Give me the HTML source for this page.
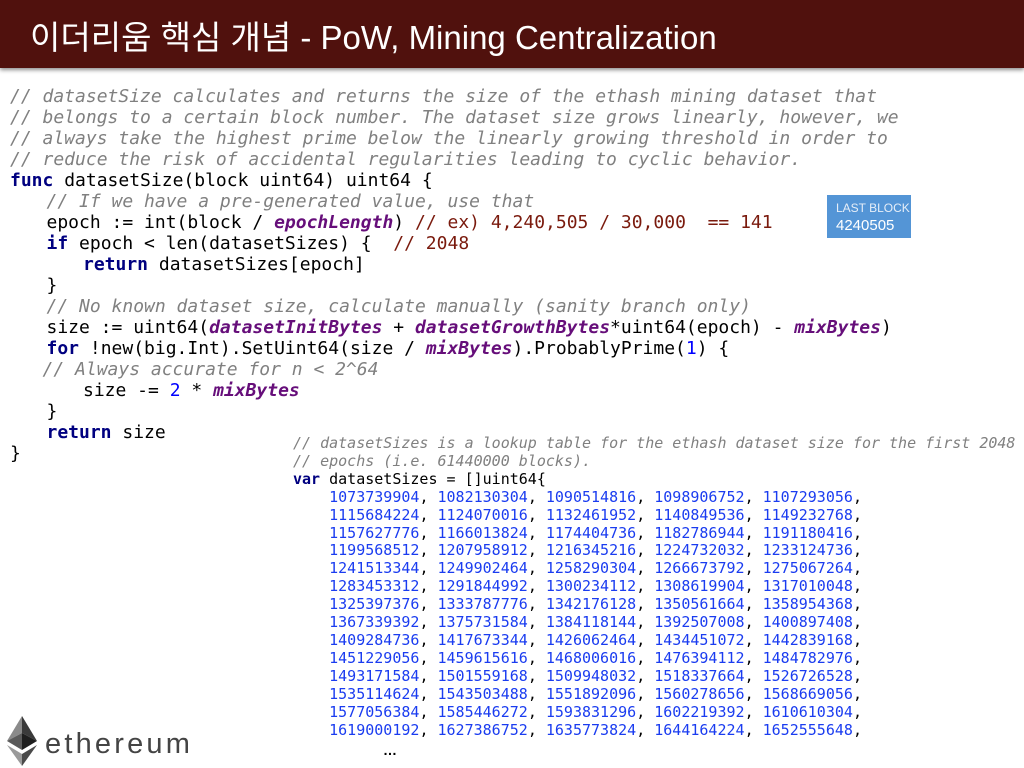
<!DOCTYPE html>
<html><head><meta charset="utf-8"><style>
body{margin:0;width:1024px;height:768px;background:#fff;position:relative;overflow:hidden}
.bar{position:absolute;left:0;top:0;width:1024px;height:68px;background:#50110d;box-shadow:0 2px 4px rgba(0,0,0,.45)}
.title{position:absolute;left:30px;top:11px;color:#fff;font:33px "Liberation Sans","Noto Sans CJK KR",sans-serif;white-space:nowrap}
pre{margin:0;position:absolute;font-family:"DejaVu Sans Mono","Liberation Mono",monospace;color:#000;tab-size:36.5px;-moz-tab-size:36.5px}
.m{left:10px;top:86px;font-size:18px;line-height:21px}
.s{left:293px;top:435px;font-size:15px;line-height:17.9px}
.c{color:#808080;font-style:italic}
.k{color:#000080;font-weight:bold}
.p{color:#660e7a;font-weight:bold;font-style:italic}
.r{color:#7a1a0d}
.n{color:#0000ff}
.s .n{color:#1a3cf0}
.box{position:absolute;left:827px;top:195px;width:84px;height:43px;background:#5495d6;color:#fff;font-family:"Liberation Sans",sans-serif}
.box .a{position:absolute;left:9px;top:6px;font-size:12px;color:#e6eef8}
.box .b{position:absolute;left:9px;top:22px;font-size:15px}
.eth{position:absolute;left:45px;top:728px;font:29px "Liberation Sans",sans-serif;font-weight:300;color:#444;letter-spacing:3.2px}
.dots{position:absolute;left:383px;top:742px;font:bold 14px "Liberation Sans",sans-serif}
</style></head><body>
<div class="bar"></div>
<div class="title">이더리움 핵심 개념 - PoW, Mining Centralization</div>
<pre class="m"><span class="c">// datasetSize calculates and returns the size of the ethash mining dataset that
// belongs to a certain block number. The dataset size grows linearly, however, we
// always take the highest prime below the linearly growing threshold in order to
// reduce the risk of accidental regularities leading to cyclic behavior.</span>
<span class="k">func</span> datasetSize(block uint64) uint64 {
	<span class="c">// If we have a pre-generated value, use that</span>
	epoch := int(block / <span class="p">epochLength</span>) <span class="r">// ex) 4,240,505 / 30,000  == 141</span>
	<span class="k">if</span> epoch &lt; len(datasetSizes) {  <span class="r">// 2048</span>
		<span class="k">return</span> datasetSizes[epoch]
	}
	<span class="c">// No known dataset size, calculate manually (sanity branch only)</span>
	size := uint64(<span class="p">datasetInitBytes</span> + <span class="p">datasetGrowthBytes</span>*uint64(epoch) - <span class="p">mixBytes</span>)
	<span class="k">for</span> !new(big.Int).SetUint64(size / <span class="p">mixBytes</span>).ProbablyPrime(<span class="n">1</span>) {
   <span class="c">// Always accurate for n &lt; 2^64</span>
		size -= <span class="n">2</span> * <span class="p">mixBytes</span>
	}
	<span class="k">return</span> size
}</pre>
<pre class="s"><span class="c">// datasetSizes is a lookup table for the ethash dataset size for the first 2048
// epochs (i.e. 61440000 blocks).</span>
<span class="k">var</span> datasetSizes = []uint64{
    <span class="n">1073739904</span>, <span class="n">1082130304</span>, <span class="n">1090514816</span>, <span class="n">1098906752</span>, <span class="n">1107293056</span>,
    <span class="n">1115684224</span>, <span class="n">1124070016</span>, <span class="n">1132461952</span>, <span class="n">1140849536</span>, <span class="n">1149232768</span>,
    <span class="n">1157627776</span>, <span class="n">1166013824</span>, <span class="n">1174404736</span>, <span class="n">1182786944</span>, <span class="n">1191180416</span>,
    <span class="n">1199568512</span>, <span class="n">1207958912</span>, <span class="n">1216345216</span>, <span class="n">1224732032</span>, <span class="n">1233124736</span>,
    <span class="n">1241513344</span>, <span class="n">1249902464</span>, <span class="n">1258290304</span>, <span class="n">1266673792</span>, <span class="n">1275067264</span>,
    <span class="n">1283453312</span>, <span class="n">1291844992</span>, <span class="n">1300234112</span>, <span class="n">1308619904</span>, <span class="n">1317010048</span>,
    <span class="n">1325397376</span>, <span class="n">1333787776</span>, <span class="n">1342176128</span>, <span class="n">1350561664</span>, <span class="n">1358954368</span>,
    <span class="n">1367339392</span>, <span class="n">1375731584</span>, <span class="n">1384118144</span>, <span class="n">1392507008</span>, <span class="n">1400897408</span>,
    <span class="n">1409284736</span>, <span class="n">1417673344</span>, <span class="n">1426062464</span>, <span class="n">1434451072</span>, <span class="n">1442839168</span>,
    <span class="n">1451229056</span>, <span class="n">1459615616</span>, <span class="n">1468006016</span>, <span class="n">1476394112</span>, <span class="n">1484782976</span>,
    <span class="n">1493171584</span>, <span class="n">1501559168</span>, <span class="n">1509948032</span>, <span class="n">1518337664</span>, <span class="n">1526726528</span>,
    <span class="n">1535114624</span>, <span class="n">1543503488</span>, <span class="n">1551892096</span>, <span class="n">1560278656</span>, <span class="n">1568669056</span>,
    <span class="n">1577056384</span>, <span class="n">1585446272</span>, <span class="n">1593831296</span>, <span class="n">1602219392</span>, <span class="n">1610610304</span>,
    <span class="n">1619000192</span>, <span class="n">1627386752</span>, <span class="n">1635773824</span>, <span class="n">1644164224</span>, <span class="n">1652555648</span>,</pre>
<div class="dots">…</div>
<div class="box"><span class="a">LAST BLOCK</span><span class="b">4240505</span></div>
<svg style="position:absolute;left:5px;top:716px" width="34" height="50" viewBox="0 0 34 50">
<polygon points="17,0 2,25 17,17" fill="#8a8a8a"/>
<polygon points="17,0 32,25 17,17" fill="#3a3a3a"/>
<polygon points="2,25 17,34 17,17" fill="#5a5a5a"/>
<polygon points="32,25 17,34 17,17" fill="#1e1e1e"/>
<polygon points="2,29 17,50 17,38" fill="#9a9a9a"/>
<polygon points="32,29 17,50 17,38" fill="#4a4a4a"/>
</svg>
<div class="eth">ethereum</div>
</body></html>
